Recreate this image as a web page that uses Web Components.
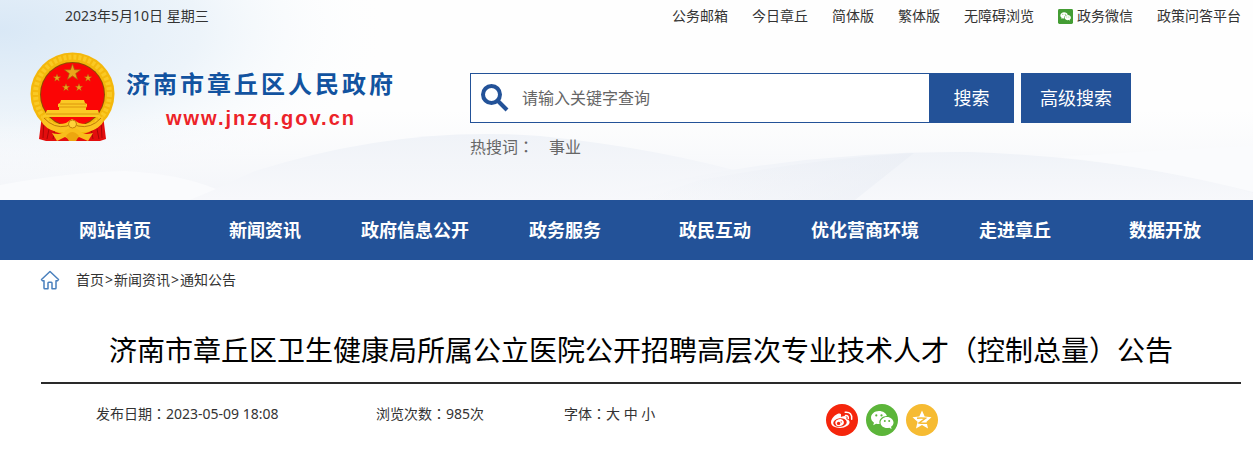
<!DOCTYPE html>
<html lang="zh-CN">
<head>
<meta charset="utf-8">
<title>济南市章丘区人民政府</title>
<style>
  body {
    margin: 0;
    background: #fff;
    color: #333;
    font: 14px/20px "Noto Sans", "Noto Sans CJK SC", sans-serif;
  }
</style>
</head>
<body>

<site-header>
  <top-bar slot="top">
    <span slot="date">2023年5月10日 星期三</span>
    <top-link>公务邮箱</top-link>
    <top-link>今日章丘</top-link>
    <top-link>简体版</top-link>
    <top-link>繁体版</top-link>
    <top-link>无障碍浏览</top-link>
    <top-link icon="wechat">政务微信</top-link>
    <top-link>政策问答平台</top-link>
  </top-bar>
  <site-brand slot="brand">
    济南市章丘区人民政府
    <span slot="domain">www.jnzq.gov.cn</span>
  </site-brand>
  <site-search slot="search"></site-search>
</site-header>

<main-nav></main-nav>
<bread-crumb></bread-crumb>

<article-head>
  济南市章丘区卫生健康局所属公立医院公开招聘高层次专业技术人才<full-mark>（</full-mark>控制总量<full-mark>）</full-mark>公告
  <span slot="date">发布日期<full-mark>：</full-mark>2023-05-09 18:08</span>
  <span slot="views">浏览次数<full-mark>：</full-mark>985次</span>
  <font-size slot="size"></font-size>
  <share-links slot="share"></share-links>
</article-head>

<script>
// shared base: every element below just supplies its markup
class BaseElement extends HTMLElement {
  constructor() {
    super();
    const shadow = this.attachShadow({ mode: 'open' });
    const template = document.createElement('template');
    template.innerHTML = this.render().trim();
    shadow.appendChild(template.content.cloneNode(true));
  }
}

const wechat = `
  <path fill="#fff" d="M13 7c-4.400 0-8 2.900-8 6.600 0 2.100 1.200 3.900 3 5.100l-.8 2.500 2.900-1.500c.9.250 1.900.400 2.900.400h.7c-.2-.6-.3-1.200-.3-1.800 0-3.500 3.300-6.300 7.300-6.300h.2C20.300 9.200 17 7 13 7z"/>
  <path fill="#fff" d="M27.500 18.500c0-3-2.900-5.500-6.500-5.500s-6.500 2.500-6.500 5.500S17.400 24 21 24c.8 0 1.600-.1 2.300-.3l2.300 1.300-.6-2.200c1.500-1 2.500-2.600 2.500-4.300z"/>
  <g fill="var(--eye, #5cb53a)">
    <circle cx="10.300" cy="11.400" r="1.100"/><circle cx="15.500" cy="11.400" r="1.100"/>
    <circle cx="18.800" cy="17" r="1"/><circle cx="23.200" cy="17" r="1"/>
  </g>`;

// full-width punctuation, centred in its cell
class FullMark extends BaseElement {
  // kept on one line: whitespace would show between the characters
  render() {
    return `<style>:host { font-family: "Noto Sans CJK TC", sans-serif; line-height: 1; }</style><span lang="zh-TW"><slot></slot></span>`;
  }
}

class SiteHeader extends BaseElement {
  render() {
    return `
      <style>
        :host {
          display: block;
          position: relative;
          height: 200px;
          overflow: hidden;
          background: #fefefe;
        }
        .sky {
          position: absolute;
          inset: 0;
          width: 100%;
          height: 100%;
        }
        .content { position: relative; }
        .row {
          display: grid;
          grid-template-columns: 440px 1fr;
          padding: 20px 0 0 30px;
        }
      </style>
      <svg class="sky" viewBox="0 0 1253 200" preserveAspectRatio="none" aria-hidden="true">
        <defs>
          <radialGradient id="glow" gradientUnits="userSpaceOnUse" cx="0" cy="0" r="1" gradientTransform="translate(0 30) scale(400 180)">
            <stop offset="0" stop-color="#d9e8f6"/>
            <stop offset=".5" stop-color="#edf4fa"/>
            <stop offset="1" stop-color="#fff" stop-opacity="0"/>
          </radialGradient>
          <linearGradient id="hill" x1="0" y1="0" x2="0" y2="1">
            <stop offset="0" stop-color="#f0f3f8"/>
            <stop offset="1" stop-color="#f7f8fb"/>
          </linearGradient>
          <linearGradient id="shade" x1="0" y1="0" x2="1" y2="0">
            <stop offset="0" stop-color="#e9edf4" stop-opacity="0"/>
            <stop offset="1" stop-color="#e9edf4"/>
          </linearGradient>
          <linearGradient id="mist" x1="0" y1="0" x2="0" y2="1">
            <stop offset="0" stop-color="#f4f6fa" stop-opacity="0"/>
            <stop offset="1" stop-color="#f3f5f9"/>
          </linearGradient>
        </defs>
        <rect width="1253" height="200" fill="url(#glow)"/>
        <rect y="110" width="1253" height="90" fill="url(#mist)"/>
        <path d="M190 200 255 171Q400 125 540 136 700 152 830 200z" fill="url(#hill)"/>
        <path d="M0 185Q70 172 125 171 180 174 216 189L190 200H0z" fill="#fafbfd"/>
        <path d="M590 200Q780 150 970 152 1130 158 1253 193V200z" fill="url(#hill)"/>
        <path d="M700 180Q820 158 914 153L855 200H640z" fill="url(#shade)" opacity=".6"/>
        <path d="M1060 157Q1160 150 1253 146V192Q1160 168 1060 157z" fill="#fafbfd"/>
      </svg>
      <div class="content">
        <slot name="top"></slot>
        <div class="row">
          <slot name="brand"></slot>
          <slot name="search"></slot>
        </div>
      </div>`;
  }
}

class TopBar extends BaseElement {
  render() {
    return `
      <style>
        :host {
          display: flex;
          justify-content: space-between;
          align-items: center;
          height: 32px;
          padding: 0 12px 0 65px;
        }
        nav { display: flex; gap: 24px; }
      </style>
      <slot name="date"></slot>
      <nav><slot></slot></nav>`;
  }
}

class TopLink extends BaseElement {
  render() {
    const icon = this.getAttribute('icon') === 'wechat' ? `
      <svg width="15" height="15" viewBox="0 0 32 32" aria-hidden="true">
        <rect width="32" height="32" rx="3" fill="#449d34"/>${wechat}
      </svg>` : '';
    return `
      <style>
        :host { display: block; }
        a {
          display: flex;
          align-items: center;
          gap: 4px;
          color: #333;
          text-decoration: none;
        }
        a:hover { color: #235298; }
      </style>
      <a href="#">${icon}<slot></slot></a>`;
  }
}

class SiteBrand extends BaseElement {
  render() {
    const star = 'M0-10 2.400-3.200 9.500-3.100 3.800 1.200 5.900 8.100 0 4-5.900 8.100-3.800 1.200-9.500-3.100-2.400-3.200z';
    return `
      <style>
        :host { display: flex; gap: 11px; }
        svg { flex: none; }
        a { color: inherit; text-decoration: none; }
        .names {
          display: flex;
          flex-direction: column;
          align-items: center;
          padding-top: 16px;
        }
        .name {
          font: bold 24px/30px "Noto Sans CJK SC", sans-serif;
          letter-spacing: 3px;
          color: #1253a0;
        }
        .domain {
          font: bold 20px/40px "Liberation Sans", sans-serif;
          letter-spacing: 2px;
          color: #ec2329;
        }
        .name, .domain { text-shadow: 0 0 3px #fff; }
      </style>
      <svg width="85" height="91" viewBox="0 0 85 91" role="img" aria-label="国徽">
        <path d="M12 63 9 87l7 2h54l6-2-3-24z" fill="#e30d0d"/>
        <path d="M14 68l-1 18M20 72l-3 15M66 72l3 15M71 68l1 18M25 76l-2 11M61 76l2 11" stroke="#a90606" fill="none"/>
        <ellipse cx="42.500" cy="42" rx="42" ry="41.500" fill="#f4b80c"/>
        <ellipse cx="42.500" cy="42" rx="37" ry="37" fill="none" stroke="#fac924" stroke-width="5" stroke-dasharray="3 2"/>
        <circle cx="42.500" cy="42.500" r="32.500" fill="#8f4a04"/>
        <circle cx="42.500" cy="42.500" r="31.500" fill="#fb0505"/>
        <g fill="#e9a51b" stroke="#a0660c" stroke-width=".8">
          <path d="${star}" transform="translate(42.500 20.500) scale(.85)"/>
          <path d="${star}" transform="translate(27 26) scale(.4)"/>
          <path d="${star}" transform="translate(58 26) scale(.4)"/>
          <path d="${star}" transform="translate(36 35.500) scale(.4)"/>
          <path d="${star}" transform="translate(49 35.500) scale(.4)"/>
        </g>
        <path d="M31 48h23l1 3 2 1v3H28v-3l2-1zM29 55h27v3H29zM17 58h51l2 7H14z" fill="#fbc924"/>
        <path d="M30 52h26M29 55h28M16 62h53" stroke="#d78b08" stroke-width=".8"/>
        <path d="M11 63q12 12 25 8l6-4 7 4q13 4 25-8l-2 9q-9 9-21 8l-9-5-8 5q-13 1-21-8z" fill="#fbc321"/>
        <path d="M14 66q10 11 23 8l5-3 6 3q13 3 23-8" fill="none" stroke="#bd7a08"/>
        <path d="M22 81q10 3 14-3l6-3 7 3q4 6 14 3l-5 8-9-4-7 4-7-4-8 4z" fill="#f9bd1b"/>
        <circle cx="42.500" cy="72" r="4" fill="#ffd23a" stroke="#c5820b"/>
        <path d="M36 84q6-8 13 0l-3 5h-7z" fill="#eda60e"/>
      </svg>
      <div class="names">
        <a class="name" href="#"><slot></slot></a>
        <a class="domain" href="#"><slot name="domain"></slot></a>
      </div>`;
  }
}

class SiteSearch extends BaseElement {
  render() {
    return `
      <style>
        :host { display: block; padding-top: 21px; }
        form { display: flex; }
        label {
          display: flex;
          align-items: center;
          gap: 13px;
          box-sizing: border-box;
          width: 459px;
          height: 50px;
          padding: 0 8px 0 10px;
          border: 1px solid #235298;
          border-right: 0;
          background: #fff;
        }
        input {
          flex: 1;
          min-width: 0;
          padding: 0;
          border: 0;
          outline: 0;
          background: none;
          color: #333;
          font: 16px/24px "Noto Sans", "Noto Sans CJK SC", sans-serif;
        }
        input::placeholder { color: #666; opacity: 1; }
        button {
          width: 85px;
          height: 50px;
          padding: 0;
          border: 0;
          background: #235298;
          color: #fff;
          font: 18px/24px "Noto Sans", "Noto Sans CJK SC", sans-serif;
          cursor: pointer;
        }
        .advanced { width: 110px; margin-left: 7px; }
        .hot {
          display: flex;
          gap: 15px;
          margin-top: 12px;
          font-size: 16px;
          line-height: 24px;
          color: #666;
        }
        .hot a { color: inherit; text-decoration: none; }
      </style>
      <form onsubmit="return false">
        <label>
          <svg width="28" height="28" viewBox="0 0 28 28" aria-hidden="true">
            <circle cx="10.500" cy="10.500" r="8.500" fill="none" stroke="#235298" stroke-width="4"/>
            <path d="m17 17 9 9" stroke="#235298" stroke-width="4"/>
          </svg>
          <input type="text" placeholder="请输入关键字查询" aria-label="关键字">
        </label>
        <button type="submit">搜索</button>
        <button type="button" class="advanced">高级搜索</button>
      </form>
      <div class="hot"><span>热搜词<full-mark>：</full-mark></span><a href="#">事业</a></div>`;
  }
}

class MainNav extends BaseElement {
  render() {
    const items = ['网站首页', '新闻资讯', '政府信息公开', '政务服务', '政民互动', '优化营商环境', '走进章丘', '数据开放'];
    return `
      <style>
        :host { display: block; background: #235298; }
        nav {
          display: grid;
          grid-template-columns: repeat(8, 1fr);
          padding: 0 13px 0 40px;
        }
        a {
          color: #fff;
          font-size: 18px;
          font-weight: bold;
          line-height: 60px;
          text-align: center;
          text-decoration: none;
          white-space: nowrap;
        }
        a:hover { background: #1a4280; }
      </style>
      <nav>${items.map((text) => `<a href="#">${text}</a>`).join('')}</nav>`;
  }
}

class BreadCrumb extends BaseElement {
  render() {
    return `
      <style>
        :host { display: block; padding: 0 12px 0 40px; }
        nav { display: flex; align-items: center; height: 40px; }
        svg { margin-right: 16px; }
        a { color: #333; text-decoration: none; }
        i { margin: 0 1px; font-style: normal; }
      </style>
      <nav>
        <svg width="20" height="20" viewBox="0 0 20 20" fill="none" stroke="#4a80bd" stroke-width="1.500" stroke-linejoin="round" aria-hidden="true">
          <path d="M10 1.500 1.500 9.500l1 1.200H4V18q0 .8.800.800H8V13q0-.8.800-.8h2.400q.8 0 .8.800v5.800h3.200q.8 0 .8-.8v-7.300h1.500l1-1.200z"/>
        </svg>
        <a href="#">首页</a><i>&gt;</i><a href="#">新闻资讯</a><i>&gt;</i><a href="#">通知公告</a>
      </nav>`;
  }
}

class ArticleHead extends BaseElement {
  render() {
    return `
      <style>
        :host { display: block; margin: 0 12px 0 41px; }
        h1 {
          margin: 0;
          padding: 30px 0 12px;
          border-bottom: 2px solid #2a2a2a;
          color: #000;
          font-size: 28px;
          font-weight: normal;
          line-height: 40px;
          text-align: center;
        }
        .meta {
          display: grid;
          grid-template-columns: 280px 188px 262px 1fr;
          padding: 20px 0 20px 55px;
        }
      </style>
      <h1><slot></slot></h1>
      <div class="meta">
        <slot name="date"></slot>
        <slot name="views"></slot>
        <slot name="size"></slot>
        <slot name="share"></slot>
      </div>`;
  }
}

class FontSize extends BaseElement {
  render() {
    return `
      <style>
        :host { display: block; }
        a { color: inherit; text-decoration: none; }
      </style>
      字体<full-mark>：</full-mark><a href="#">大</a> <a href="#">中</a> <a href="#">小</a>`;
  }
}

class ShareLinks extends BaseElement {
  render() {
    return `
      <style>
        :host { display: flex; gap: 8px; }
        a, svg { display: block; }
      </style>
      <a href="#" aria-label="微博">
        <svg width="32" height="32" viewBox="0 0 32 32">
          <circle cx="16" cy="16" r="16" fill="#f5260c"/>
          <path fill="#fff" d="M20.800 15.300c-.4-.1-.6-.2-.4-.7.900-2.300-1-3.500-5-1.800-.4.200-.6 0-.5-.4.600-2-.1-3.400-2.400-2.800C9.600 10.300 5 14.600 5 18.300 5 21.900 9.200 24 14 24c5.700 0 9.600-3 9.600-5.700 0-1.600-1.300-2.600-2.800-3z"/>
          <ellipse cx="14" cy="18.600" rx="6.800" ry="4.300" fill="#f5260c" transform="rotate(-8 14 18.600)"/>
          <ellipse cx="13.600" cy="18.700" rx="4.300" ry="3.500" fill="#fff" transform="rotate(-15 13.600 18.700)"/>
          <circle cx="12.600" cy="19.400" r="1.700" fill="#f5260c"/>
          <circle cx="15.200" cy="17.900" r=".7" fill="#f5260c"/>
          <path d="M19.500 11.600q3.300-.3 2.800 3M19.200 8.300q7.200-.7 6.500 6.900" fill="none" stroke="#fff" stroke-width="1.500" stroke-linecap="round"/>
        </svg>
      </a>
      <a href="#" aria-label="微信">
        <svg width="32" height="32" viewBox="0 0 32 32">
          <circle cx="16" cy="16" r="16" fill="#5cb53a"/>${wechat}
        </svg>
      </a>
      <a href="#" aria-label="QQ空间">
        <svg width="32" height="32" viewBox="0 0 32 32">
          <circle cx="16" cy="16" r="16" fill="#f6bb32"/>
          <path fill="#fff" d="m16 6.500 2.700 5.900 6.800.8-5 4.600 1.500 6.700-6-3.400-6 3.400 1.500-6.700-5-4.600 6.800-.8z"/>
          <path fill="none" stroke="#f6bb32" stroke-width="1.500" d="M11 14.300q4-.7 8.500 0l-6.300 4.600q4.800 1 10.300-.2"/>
        </svg>
      </a>`;
  }
}

customElements.define('full-mark', FullMark);
customElements.define('site-header', SiteHeader);
customElements.define('top-bar', TopBar);
customElements.define('top-link', TopLink);
customElements.define('site-brand', SiteBrand);
customElements.define('site-search', SiteSearch);
customElements.define('main-nav', MainNav);
customElements.define('bread-crumb', BreadCrumb);
customElements.define('article-head', ArticleHead);
customElements.define('font-size', FontSize);
customElements.define('share-links', ShareLinks);
</script>
</body>
</html>
